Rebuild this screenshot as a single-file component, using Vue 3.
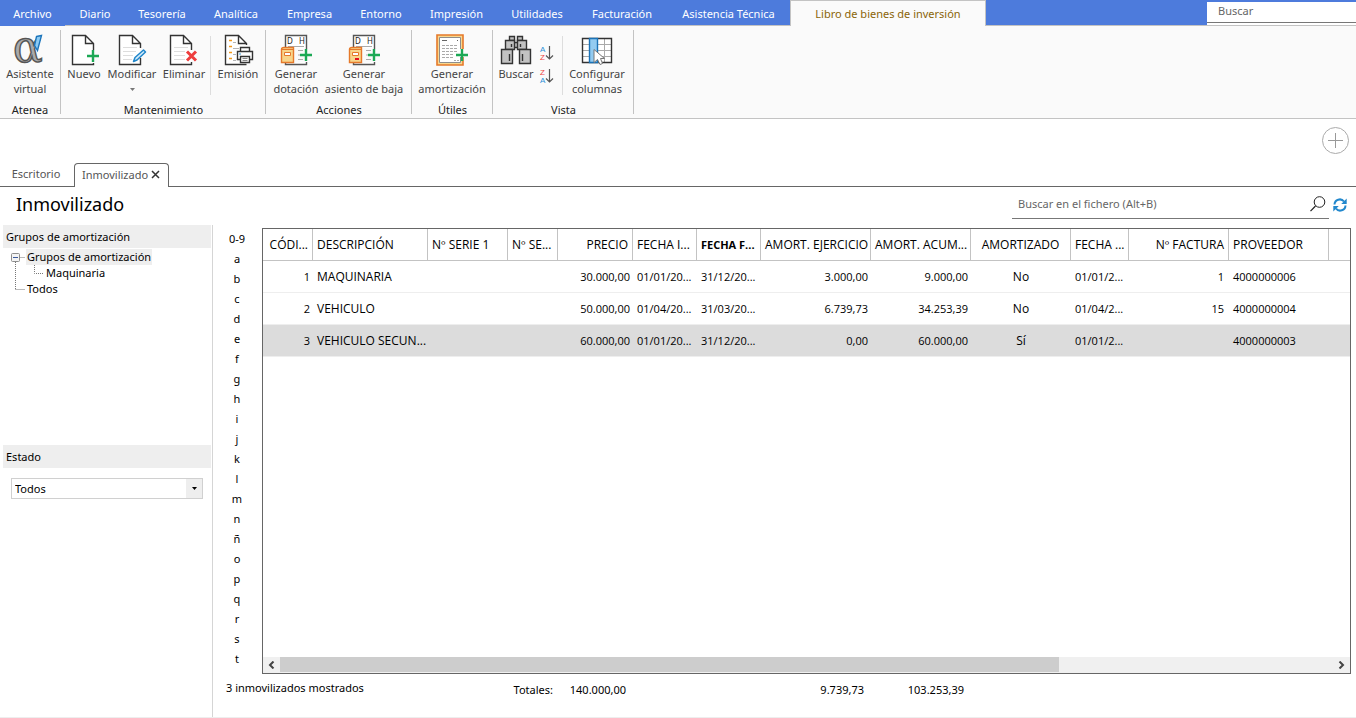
<script setup>
import { ref } from 'vue'

const menus = ['Archivo', 'Diario', 'Tesorería', 'Analítica', 'Empresa', 'Entorno', 'Impresión', 'Utilidades', 'Facturación', 'Asistencia Técnica']
const letters = ['0-9', ...'abcdefghijklmnñopqrst']
const estado = ref('Todos')
const globalSearch = ref('')
const fileSearch = ref('')

const columns = [
  { label: 'CÓDI...', align: 'right', num: true },
  { label: 'DESCRIPCIÓN' },
  { label: 'Nº SERIE 1' },
  { label: 'Nº SE...' },
  { label: 'PRECIO', align: 'right', num: true },
  { label: 'FECHA I...', num: true },
  { label: 'FECHA F...', bold: true, num: true },
  { label: 'AMORT. EJERCICIO', align: 'right', num: true },
  { label: 'AMORT. ACUM...', align: 'right', num: true },
  { label: 'AMORTIZADO', align: 'center' },
  { label: 'FECHA ...', num: true },
  { label: 'Nº FACTURA', align: 'right', tight: true, num: true },
  { label: 'PROVEEDOR', num: true },
  { label: '' }
]
const rows = [
  ['1', 'MAQUINARIA', '', '', '30.000,00', '01/01/20...', '31/12/20...', '3.000,00', '9.000,00', 'No', '01/01/2...', '1', '4000000006', ''],
  ['2', 'VEHICULO', '', '', '50.000,00', '01/04/20...', '31/03/20...', '6.739,73', '34.253,39', 'No', '01/04/2...', '15', '4000000004', ''],
  ['3', 'VEHICULO SECUN...', '', '', '60.000,00', '01/01/20...', '31/12/20...', '0,00', '60.000,00', 'Sí', '01/01/2...', '', '4000000003', '']
]
</script>

<template>
  <div class="app">
    <header class="menubar">
      <nav class="menus">
        <button v-for="m in menus" :key="m" class="menu">{{ m }}</button>
        <button class="menu active">Libro de bienes de inversión</button>
      </nav>
      <div class="global-search">
        <input v-model="globalSearch" type="text" placeholder="Buscar" aria-label="Buscar" />
      </div>
    </header>

    <section class="ribbon">
      <div class="group g-atenea">
        <div class="tools">
          <button class="tool w60">
            <svg class="icon" viewBox="0 0 34 34">
              <text x="0" y="29" class="alpha">α</text>
              <path d="M23.5 3.5L28.5 2.5L24.5 17.5L21.5 12.5Z" fill="#8ccaf2" stroke="#1c75bb" stroke-width="1.4" />
            </svg>
            <span>Asistente<br />virtual</span>
          </button>
        </div>
        <div class="caption">Atenea</div>
      </div>

      <div class="group g-mant">
        <div class="tools">
          <button class="tool w40">
            <svg class="icon" viewBox="0 0 34 34">
              <path class="sheet" d="M26.5 17V10.5L18.5 2.5H5.5V31.5H26.5V30M18.5 2.5V10.5H26.5" />
              <path class="plus" d="M26 17V29M20 23H32" />
            </svg>
            <span>Nuevo</span>
          </button>
          <button class="tool w56">
            <svg class="icon" viewBox="0 0 34 34">
              <path class="sheet" d="M25.5 15V10.5L17.5 2.5H4.5V31.5H25.5V25M17.5 2.5V10.5H25.5" />
              <path class="lines" d="M8 14.5H22M8 18.5H21M8 22.5H18M8 26.5H17" />
              <path d="M18.5 28.5L20 24.5L28.5 17L30.5 19L22 27Z" fill="#d4ecfa" stroke="#1f86cb" stroke-width="1.5" stroke-linejoin="round" />
            </svg>
            <span>Modificar</span>
            <svg class="caret" viewBox="0 0 5 3"><path d="M0 0H5L2.5 3Z" fill="#777" /></svg>
          </button>
          <button class="tool w48">
            <svg class="icon" viewBox="0 0 34 34">
              <path class="sheet" d="M24.5 17V10.5L16.5 2.5H3.5V31.5H24.5V29M16.5 2.5V10.5H24.5" />
              <path class="lines" d="M7 14.5H21M7 18.5H18M7 22.5H18M7 26.5H18" />
              <path d="M20 18.5L29 27.5M29 18.5L20 27.5" stroke="#ee3d3d" stroke-width="3" />
            </svg>
            <span>Eliminar</span>
          </button>
          <i class="split"></i>
          <button class="tool w50">
            <svg class="icon" viewBox="0 0 34 34">
              <path class="sheet" d="M25.5 12V10.5L17.5 2.5H4.5V31.5H25.5M17.5 2.5V10.5H25.5" />
              <path d="M8 7.5H11M8 13.5H11M8 19.5H11M8 25.5H11" stroke="#f29a1f" stroke-width="1.6" />
              <path d="M12 9.5H15M12 15.5H18M12 21.5H15M12 27.5H15" stroke="#b5b5b5" />
              <path d="M19.5 18.5V14.5H28.5V18.5M20 26.5H16.5V18.5H31.5V26.5H28" fill="#fff" stroke="#333" stroke-width="1.4" />
              <path d="M19.5 23.5H28.5V29.5H19.5Z" fill="#fff" stroke="#333" stroke-width="1.4" />
              <path d="M21.5 25.5H26.5M21.5 27.5H26.5" stroke="#888" />
              <path d="M18 21H20" stroke="#2f8fd0" />
            </svg>
            <span>Emisión</span>
          </button>
        </div>
        <div class="caption">Mantenimiento</div>
      </div>

      <div class="group g-acc">
        <div class="tools">
          <button v-for="n in 2" :key="n" class="tool" :class="n === 1 ? 'w54' : 'w82'">
            <svg class="icon" viewBox="0 0 34 34">
              <path d="M6.5 14V2.5H27.5V16M27.5 29V31.5H6.5V30" fill="#fff" stroke="#555" stroke-width="1.4" />
              <text x="8" y="11" class="dh">D</text>
              <text x="20" y="11" class="dh">H</text>
              <path d="M9 13.5H25M19 17.5H24M19 22H22M19 26.5H24" stroke="#aaa" />
              <path d="M2.5 16.5Q2.5 14.5 5 14.5H14.5V29.5H2.5Z" fill="#f8d68b" stroke="#e5792a" stroke-width="1.4" />
              <path d="M3 16.5H14" stroke="#e5792a" />
              <path d="M5.5 19.5H11.5V22.5H5.5Z" fill="#fff" stroke="#e5792a" />
              <path v-if="n === 2" d="M8 26H12" stroke="#e3101f" stroke-width="2" />
              <path class="plus" d="M27 16V28M21 22H33" />
            </svg>
            <span v-if="n === 1">Generar<br />dotación</span>
            <span v-else>Generar<br />asiento de baja</span>
          </button>
        </div>
        <div class="caption">Acciones</div>
      </div>

      <div class="group g-util">
        <div class="tools">
          <button class="tool w74">
            <svg class="icon" viewBox="0 0 34 34">
              <path d="M2 2H28V32H2Z" fill="#f8d78f" stroke="#e5792a" stroke-width="1.6" />
              <path d="M4.5 4.5H25.5V29.5H4.5Z" fill="#fff" stroke="#8d8d8d" />
              <path d="M7 7.5H12M22 7.5H23" stroke="#666" />
              <path d="M7 12.5H23M7 15.5H23M7 18.5H23M7 21.5H18M7 24.5H19M19 27.5H21M22 27.5H24" stroke="#aaa" stroke-dasharray="3 1" />
              <path d="M21 22H27V16" stroke="#fff" stroke-width="4" fill="none" />
              <path class="plus" d="M27 16V28M21 22H33" />
            </svg>
            <span>Generar<br />amortización</span>
          </button>
        </div>
        <div class="caption">Útiles</div>
      </div>

      <div class="group g-vista">
        <div class="tools">
          <button class="tool w40">
            <svg class="icon" viewBox="0 0 34 34">
              <g fill="#c2c2c2" stroke="#333" stroke-width="1.4">
                <path d="M14 9.5H20V14.5H14Z" />
                <path d="M10.5 3.5H15.5V7.5H10.5ZM18.5 3.5H23.5V7.5H18.5Z" />
                <path d="M6.5 7.5H15.5V16.5H6.5ZM18.5 7.5H27.5V16.5H18.5Z" />
                <path d="M2.5 16.5H13.5V30.5H2.5ZM20.5 16.5H31.5V30.5H20.5Z" />
                <path d="M12.5 11V14M21.5 11V14M10.5 21V28M23.5 21V28" />
              </g>
            </svg>
            <span>Buscar</span>
          </button>
          <div class="sorts">
            <button class="sort" aria-label="Orden ascendente">
              <svg viewBox="0 0 15 16"><text x="1" y="7" class="az a">A</text><text x="1" y="15" class="az z">Z</text><path d="M10.5 1V14M7 10.5L10.5 14L14 10.5" class="arrow" /></svg>
            </button>
            <button class="sort" aria-label="Orden descendente">
              <svg viewBox="0 0 15 16"><text x="1" y="7" class="az z">Z</text><text x="1" y="15" class="az a">A</text><path d="M10.5 1V14M7 10.5L10.5 14L14 10.5" class="arrow" /></svg>
            </button>
          </div>
          <i class="split"></i>
          <button class="tool w64">
            <svg class="icon" viewBox="0 0 34 34">
              <path d="M2.5 5.5H31.5V29.5H2.5Z" fill="#fff" />
              <path d="M3 11.5H31M3 17.5H31M3 23.5H31M24.5 6V29M17.5 6V29" stroke="#aaa" />
              <path d="M2.5 5.5H31.5V29.5H2.5Z" fill="none" stroke="#333" stroke-width="1.4" />
              <path d="M9.5 5.5H17.5V29.5H9.5Z" fill="#93cbf1" stroke="#1b73b8" stroke-width="1.4" />
              <path d="M14 16.5V29.5L17.5 26.5L20 31.5L22.5 30.5L20.5 25.5H24.5Z" fill="#fff" stroke="#777" />
            </svg>
            <span>Configurar<br />columnas</span>
          </button>
        </div>
        <div class="caption">Vista</div>
      </div>
    </section>

    <div class="strip">
      <button class="add" aria-label="Añadir">
        <svg viewBox="0 0 27 27"><circle cx="13.5" cy="13.5" r="13" fill="none" stroke="#aaa" /><path d="M13.5 6V21M6 13.5H21" stroke="#999" /></svg>
      </button>
    </div>

    <nav class="tabs">
      <button class="tab home">Escritorio</button>
      <div class="tab current">
        <button>Inmovilizado</button>
        <button class="close" aria-label="Cerrar"><svg viewBox="0 0 9 9"><path d="M1 1L8 8M8 1L1 8" stroke="#333" stroke-width="1.5" /></svg></button>
      </div>
      <div class="rest"></div>
    </nav>

    <div class="titlebar">
      <h1>Inmovilizado</h1>
      <div class="file-search">
        <input v-model="fileSearch" type="text" placeholder="Buscar en el fichero (Alt+B)" aria-label="Buscar en el fichero" />
        <button aria-label="Buscar"><svg viewBox="0 0 16 16"><circle cx="9.5" cy="6" r="5.3" fill="none" stroke="#222" /><path d="M5.5 10L0.5 15.2" stroke="#222" stroke-width="1.2" /></svg></button>
      </div>
      <button class="refresh" aria-label="Actualizar">
        <svg viewBox="0 0 14 14"><path d="M1.5 6.5A5.3 5.3 0 0 1 11 3.5M12.5 7.5A5.3 5.3 0 0 1 3 10.5" fill="none" stroke="#2288cd" stroke-width="2" /><path d="M13.7 0.5V6H8.2ZM0.3 13.5V8H5.8Z" fill="#2288cd" /></svg>
      </button>
    </div>

    <main class="body">
      <aside class="sidebar">
        <h2>Grupos de amortización</h2>
        <div class="tree">
          <svg class="branches" viewBox="0 0 40 48">
            <path d="M10.5 8.5H15M5.5 13V40.5M5.5 40.5H15M24.5 16V24.5H33" fill="none" stroke="#777" stroke-dasharray="1 1" />
            <rect x="1.5" y="4.5" width="8" height="8" rx="1" fill="#f4f4f4" stroke="#8d8d8d" />
            <path d="M3 8.5H8" stroke="#3c5a9c" />
          </svg>
          <ul>
            <li><a href="#" class="selected">Grupos de amortización</a>
              <ul><li><a href="#">Maquinaria</a></li></ul>
            </li>
            <li><a href="#">Todos</a></li>
          </ul>
        </div>
        <h2>Estado</h2>
        <div class="combo">
          <select v-model="estado" aria-label="Estado"><option>Todos</option></select>
          <span class="drop"><svg viewBox="0 0 5 3"><path d="M0 0H5L2.5 3Z" /></svg></span>
        </div>
      </aside>

      <section class="content">
        <div class="listing">
          <nav class="letters">
            <button v-for="l in letters" :key="l">{{ l }}</button>
          </nav>
          <div class="frame">
            <div class="scroller">
              <table>
                <colgroup>
                  <col class="c50" /><col class="c115" /><col class="c80" /><col class="c50" /><col class="c75" /><col class="c64" /><col class="c64" />
                  <col class="c110" /><col class="c100" /><col class="c100" /><col class="c58" /><col class="c100" /><col class="c100" /><col />
                </colgroup>
                <thead>
                  <tr>
                    <th v-for="(c, i) in columns" :key="i" :class="[c.align, { bold: c.bold }]">{{ c.label }}</th>
                  </tr>
                </thead>
                <tbody>
                  <tr v-for="(r, i) in rows" :key="i" :class="{ picked: i === 2 }">
                    <td v-for="(v, j) in r" :key="j" :class="[columns[j].align, { tight: columns[j].tight, num: columns[j].num }]">{{ v }}</td>
                  </tr>
                </tbody>
              </table>
            </div>
            <div class="scrollbar">
              <button aria-label="Izquierda"><svg viewBox="0 0 7 8"><path d="M5.5 0.5L2 4L5.5 7.5" /></svg></button>
              <div class="track"><div class="thumb"></div></div>
              <button aria-label="Derecha"><svg viewBox="0 0 7 8"><path d="M1.5 0.5L5 4L1.5 7.5" /></svg></button>
            </div>
          </div>
        </div>
        <footer class="totals">
          <div class="count">3 inmovilizados mostrados</div>
          <div>Totales:</div>
          <div class="sum">140.000,00</div>
          <div class="sum">9.739,73</div>
          <div class="sum">103.253,39</div>
        </footer>
      </section>
    </main>
  </div>
</template>

<style>
body { margin: 0; background: #fff; }
</style>

<style scoped>
* { box-sizing: border-box; }
.app {
  display: flex; flex-direction: column; min-height: 100vh;
  font-family: "Noto Sans", "Open Sans", sans-serif; font-size: 11px; line-height: 15px; color: #000; background: #fff;
}
button, input, select { font: inherit; color: inherit; border: 0; padding: 0; margin: 0; background: none; border-radius: 0; outline: none; }
button { white-space: nowrap; }
svg { display: block; flex: none; }

.menubar { display: flex; justify-content: space-between; height: 26px; background: #4d7bdc; border-bottom: 1px solid #c3c3c3; }
.menus { display: grid; grid-template-columns: 65px 60px 74px 74px 73px 70px 81px 80px 90px 123px 196px; height: 26px; }
.menu { color: #fff; padding-top: 1px; }
.menu:first-child { background: #4d7bdc; }
.menu.active { background: #fafafa; color: #8a6508; border: 1px solid #c3c3c3; border-bottom: 0; padding-top: 0; }
.global-search { width: 149px; height: 23px; margin-top: 2px; background: #fff; }
.global-search input { display: block; width: 100%; height: 21px; padding: 0 0 3px 11px; border-bottom: 1px solid #777; }
input::placeholder { color: #666; opacity: 1; }

.ribbon { display: flex; height: 93px; background: #fafafa; border-bottom: 1px solid #c3c3c3; }
.group { position: relative; display: flex; flex-direction: column; justify-content: space-between; padding: 7px 3px 1px; }
.group::after { content: ""; position: absolute; right: 0; top: 4px; bottom: 4px; width: 1px; background: #c3c3c3; }
.g-atenea { width: 61px; padding-left: 0; padding-right: 1px; }
.g-mant { width: 205px; }
.g-acc { width: 146px; }
.g-util { width: 81px; }
.g-vista { width: 141px; }
.tools { display: flex; align-items: flex-start; }
.tool { display: flex; flex-direction: column; align-items: center; color: #444; flex: none; }
.icon { width: 34px; height: 34px; margin-bottom: -1px; overflow: visible; }
.w40 { width: 40px; } .w48 { width: 48px; } .w50 { width: 50px; } .w54 { width: 54px; } .w56 { width: 56px; }
.w60 { width: 60px; } .w64 { width: 64px; } .w74 { width: 74px; } .w82 { width: 82px; }
.caret { width: 5px; height: 3px; margin-top: 7px; }
.split { width: 1px; height: 59px; margin: 3px 2px 0; background: #ddd; }
.caption { text-align: center; color: #222; }
.sheet { fill: #fff; stroke: #333; stroke-width: 1.4; }
.lines { stroke: #ddd; fill: none; }
.plus { stroke: #1ba854; stroke-width: 2.4; fill: none; }
.alpha { font-family: "DejaVu Serif", serif; font-size: 44px; fill: #aaa; stroke: #555; stroke-width: 1.4; }
.dh { font-size: 8px; fill: #222; }
.sorts { display: flex; flex-direction: column; gap: 7px; width: 22px; margin: 12px 2px 0 0; padding-left: 3px; }
.sort svg { width: 15px; height: 16px; overflow: visible; }
.az { font-family: "Liberation Sans", sans-serif; font-size: 8px; }
.a { fill: #2b90d8; } .z { fill: #ee4545; }
.arrow { fill: none; stroke: #555; stroke-width: 1.2; }

.strip { display: flex; justify-content: flex-end; height: 44px; padding: 8px 7px 0 0; }
.add { height: 27px; }
.add svg { width: 27px; height: 27px; }

.tabs { display: flex; height: 24px; color: #555; }
.home { width: 74px; padding: 0 2px 2px 0; border-bottom: 1px solid #666; }
.current { display: flex; align-items: center; justify-content: space-between; width: 95px; padding: 0 8px 2px 7px; border: 1px solid #666; border-bottom: 0; border-radius: 4px 4px 0 0; }
.close svg { width: 9px; height: 9px; }
.rest { flex: 1; border-bottom: 1px solid #666; }

.titlebar { display: flex; height: 38px; padding: 0 9px 0 16px; }
h1 { flex: 1; margin: 0; font-weight: 400; font-size: 18px; line-height: 35px; }
.file-search { display: flex; align-items: center; width: 317px; height: 32px; padding: 2px 3px 0 6px; border-bottom: 1px solid #777; }
.file-search input { flex: 1; min-width: 0; }
.file-search svg { width: 16px; height: 16px; }
.refresh { height: 35px; margin-left: 4px; }
.refresh svg { width: 14px; height: 14px; }

.body { display: flex; flex: 1; border-bottom: 1px solid #eee; }
.sidebar { width: 213px; padding-left: 3px; padding-right: 1px; border-right: 1px solid #d5d5d5; }
h2 { margin: 0; padding-left: 3px; background: #eee; font-weight: 400; font-size: 11px; line-height: 23px; }
.tree { display: flex; height: 197px; padding: 1px 0 0 7px; }
.branches { width: 40px; height: 48px; margin-right: -24px; }
.tree ul { list-style: none; margin: 0; padding: 0; }
.tree ul ul { padding-left: 19px; }
.tree a { display: block; width: max-content; padding: 0 1px; line-height: 16px; color: #000; text-decoration: none; }
.tree a.selected { background: #eee; }
.combo { display: flex; margin: 10px 8px 0; height: 21px; border: 1px solid #d0d0d0; }
.combo select { appearance: none; flex: 1; padding-left: 3px; background: #fff; }
.drop { display: grid; place-items: center; width: 16px; background: #eee; }
.drop svg { width: 5px; height: 3px; }

.content { flex: 1; display: flex; flex-direction: column; min-width: 0; }
.listing { flex: 1; display: flex; padding: 3px 5px 0 0; }
.letters { display: flex; flex-direction: column; width: 49px; padding-right: 1px; }
.letters button { height: 20px; }
.frame { flex: 1; min-width: 0; display: flex; flex-direction: column; border: 1px solid #666; }
.scroller { flex: 1; overflow: hidden; }
table { width: 100%; table-layout: fixed; border-collapse: separate; border-spacing: 0; font-family: "Open Sans", "Noto Sans", sans-serif; font-size: 12px; }
.c50 { width: 50px; } .c58 { width: 58px; } .c64 { width: 64px; } .c75 { width: 75px; } .c80 { width: 80px; } .c100 { width: 100px; } .c110 { width: 110px; } .c115 { width: 115px; }
th, td { height: 32px; padding: 0 4px; text-align: left; font-weight: 400; white-space: nowrap; overflow: hidden; }
th { border-right: 1px solid #c3c3c3; border-bottom: 1px solid #c3c3c3; }
th:last-child { border-right: 0; }
td { border-bottom: 1px solid #eee; }
td.right { padding-right: 3px; }
td.tight { padding-right: 5px; }
td.num { font-size: 11px; }
.right { text-align: right; }
.center { text-align: center; }
th.bold { font-weight: 700; font-size: 11px; }
.picked td { background: #dcdcdc; }
.scrollbar { display: flex; height: 16px; padding-bottom: 1px; background: #f0f0f0; }
.scrollbar button { display: grid; place-items: center; width: 17px; }
.scrollbar svg { width: 7px; height: 8px; }
.scrollbar path { fill: none; stroke: #444; stroke-width: 2; }
.track { flex: 1; }
.thumb { width: 74%; height: 15px; background: #cdcdcd; }
.totals { display: grid; grid-template-columns: 285px 60px 75px 238px 100px; height: 43px; padding-top: 8px; }
.totals div { padding: 0 5px 0 0; text-align: right; }
.totals .count { padding-left: 13px; text-align: left; margin-top: -2px; }
.totals .sum { padding-right: 7px; }
</style>
